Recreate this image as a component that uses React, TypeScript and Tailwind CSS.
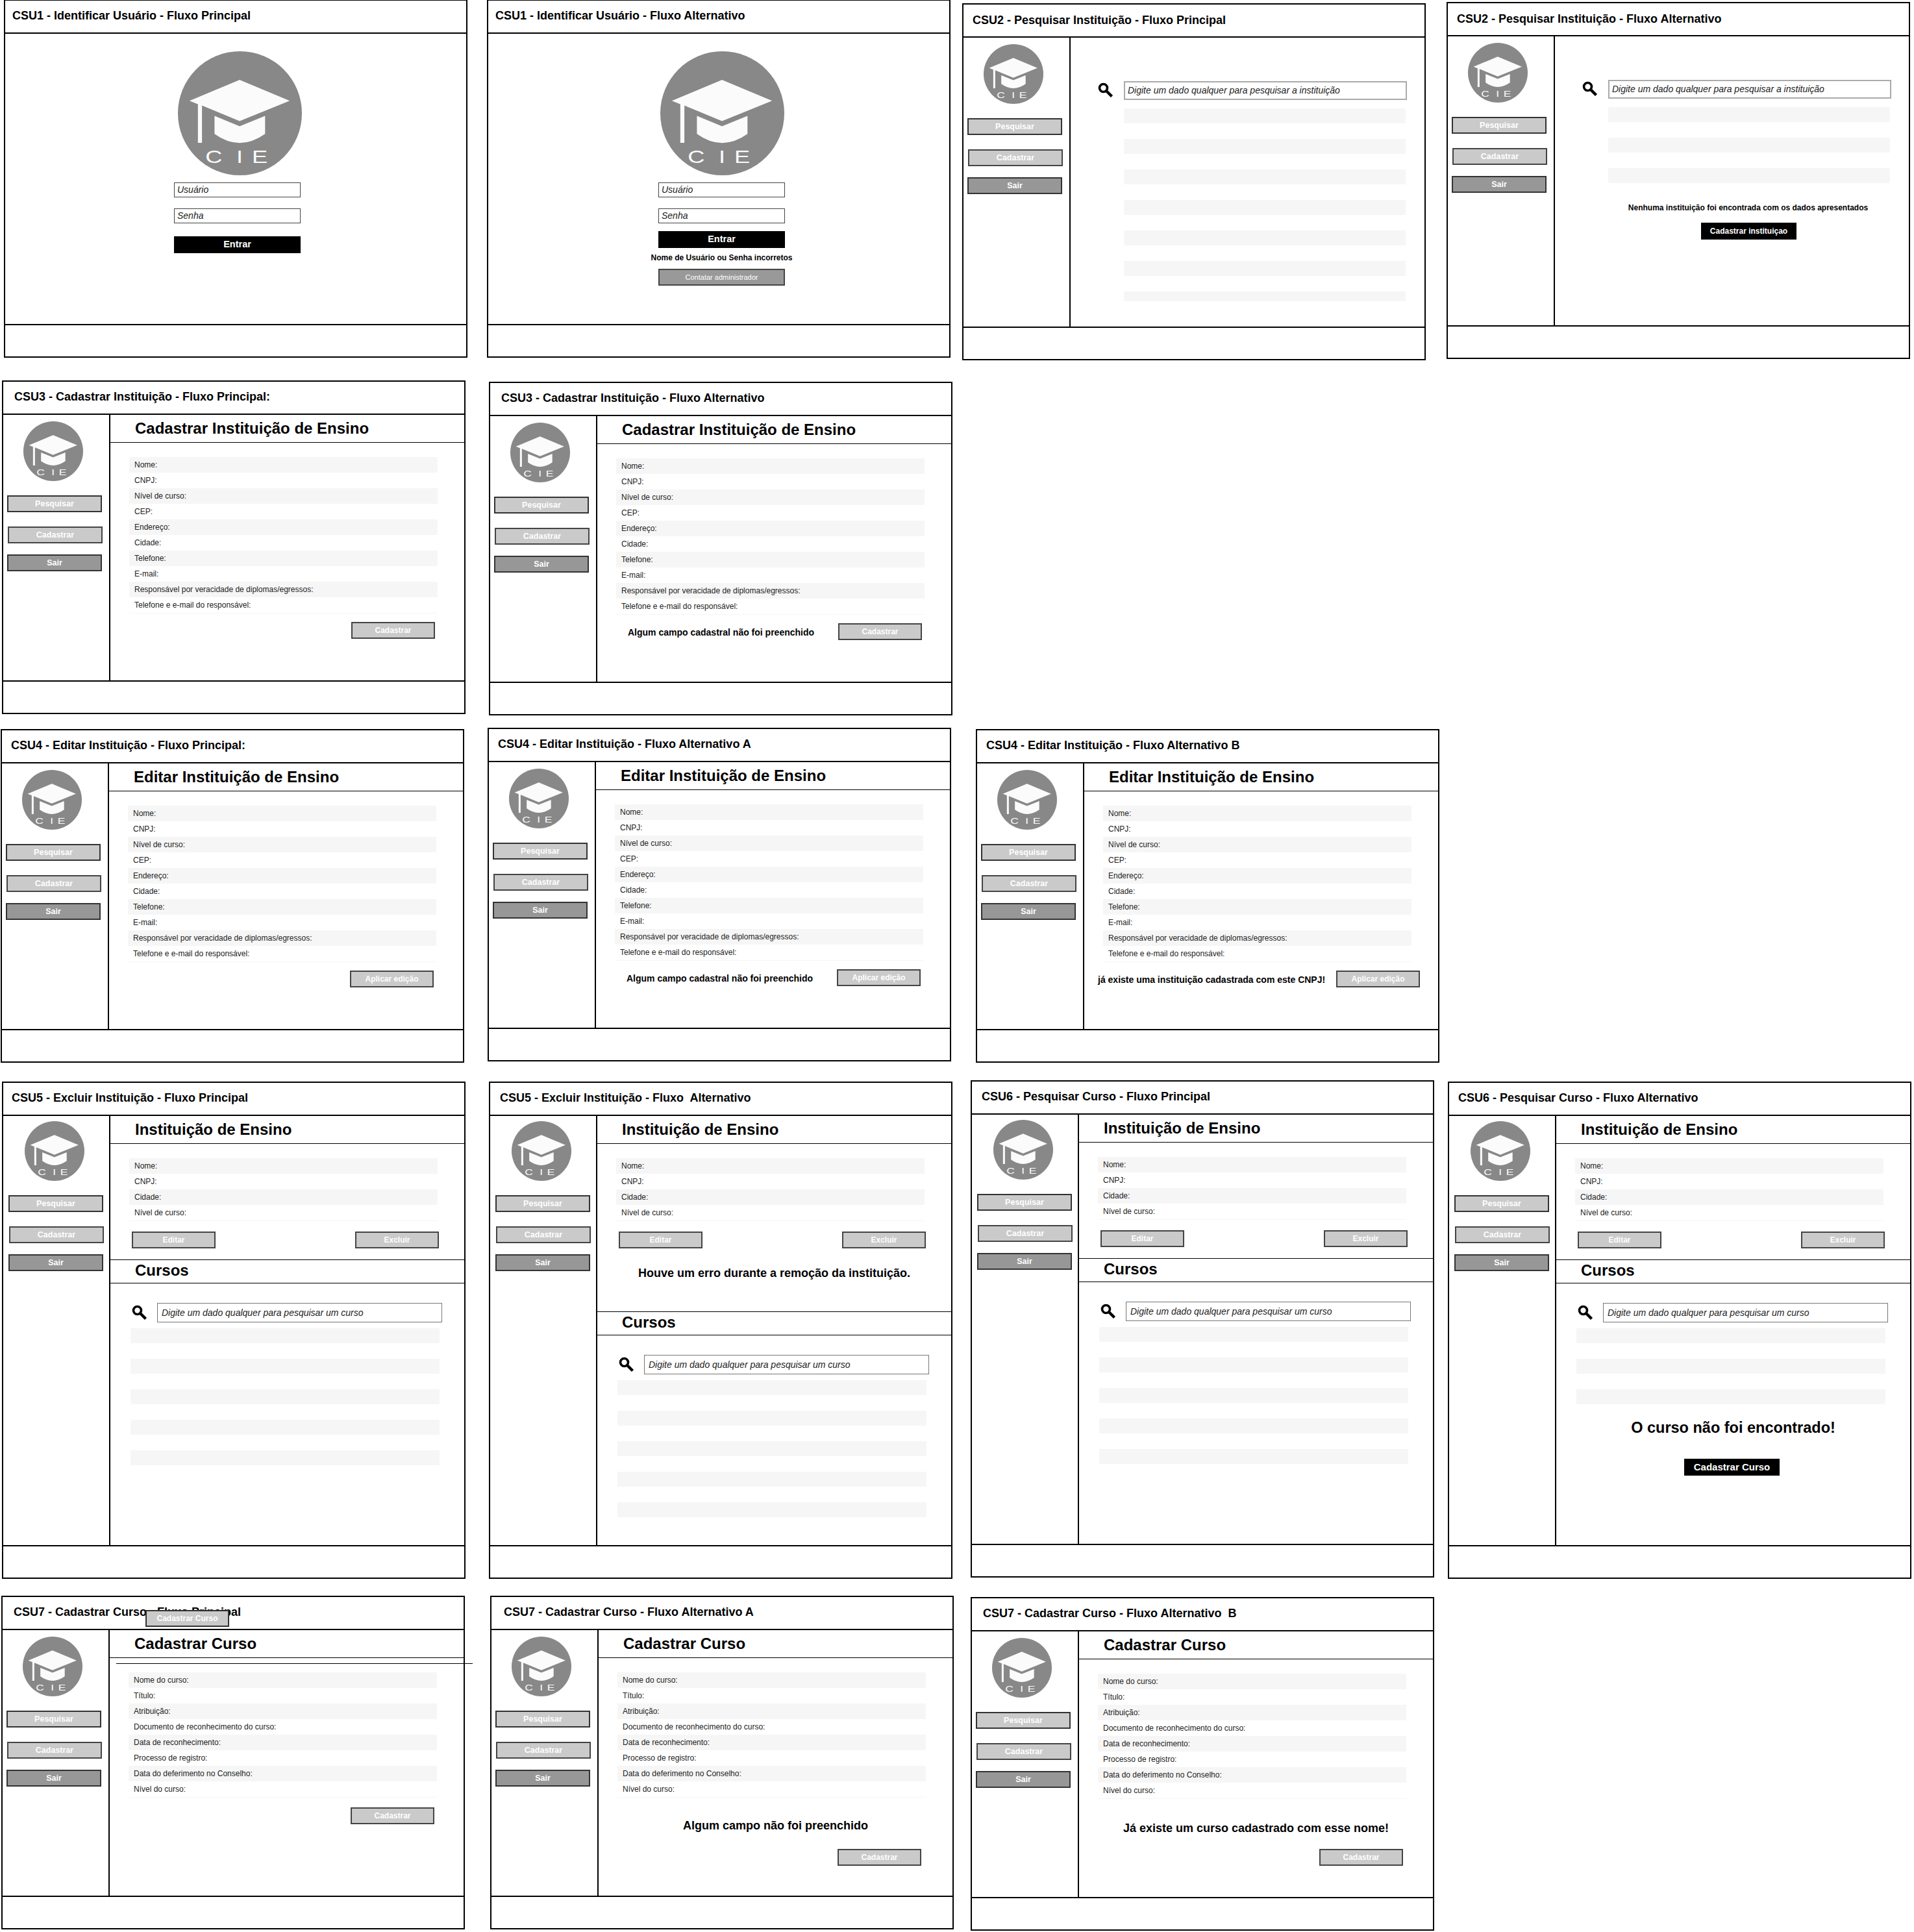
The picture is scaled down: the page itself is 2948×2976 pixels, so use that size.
import React from "react";

const letters = [
  { ch: "C", x: 42.5, sx: 1.3 },
  { ch: "I", x: 90.5, sx: 1.3 },
  { ch: "E", x: 114.5, sx: 1.3 },
];

function Logo({ size }: { size: "lg" | "sm" }) {
  return (
    <svg viewBox="0 0 192 192" className={size === "lg" ? "block w-[191px] h-[191px]" : "block w-[92px] h-[92px]"}>
      <circle cx="96" cy="96" r="96" fill="#888888" />
      <polygon points="18,76.7 95.6,44.3 173,76.7 95.6,108 37.3,84 37.3,141.7 31,141.7 31,82" fill="#fbfbfb" />
      <path d="M56.7 100 L95.6 116 L135 100 L135 128 Q95.6 156 56.7 128 Z" fill="#fbfbfb" />
      {letters.map((l) => (
        <text key={l.ch} transform={`translate(${l.x} 173) scale(${l.sx} 1)`} fontSize="28" fill="#fbfbfb" fontFamily="Liberation Sans, sans-serif">{l.ch}</text>
      ))}
    </svg>
  );
}

function Magnifier() {
  return (
    <svg viewBox="0 0 24 24" className="block w-[24px] h-[24px] shrink-0">
      <circle cx="8.5" cy="8.5" r="6" fill="none" stroke="#000" strokeWidth="3.6" />
      <path d="M13 13 L21.5 21.5" stroke="#000" strokeWidth="4.4" />
    </svg>
  );
}

function LightBtn({ label, className = "" }: { label: string; className?: string }) {
  return (
    <div className={`h-[26px] w-[129px] bg-[#cacaca] border-2 border-[#444] flex items-center justify-center text-white font-bold text-[12px] shrink-0 ${className}`}>
      {label}
    </div>
  );
}

function Sidebar({ tall }: { tall?: boolean }) {
  return (
    <div className={`w-[165px] shrink-0 border-r-2 border-black flex flex-col ${tall ? "pl-[2px]" : ""}`}>
      <div className={`${tall ? "mt-[8px]" : "mt-[10px]"} ml-[31px]`}><Logo size="sm" /></div>
      <div className="mt-[22px] ml-[6px] h-[26px] w-[146px] bg-[#cacaca] border-2 border-[#333] flex items-center justify-center text-white font-bold text-[12.5px]">Pesquisar</div>
      <div className="mt-[22px] ml-[7px] h-[26px] w-[146px] bg-[#cacaca] border-2 border-[#444] flex items-center justify-center text-white font-bold text-[12.5px]">Cadastrar</div>
      <div className="mt-[17px] ml-[6px] h-[26px] w-[146px] bg-[#979797] border-2 border-[#333] flex items-center justify-center text-white font-bold text-[12.5px]">Sair</div>
    </div>
  );
}

function Frame({ x, y, h, title, titleClass = "pl-[14px] pb-[2px]", children, noSidebar, tall, overlay }: {
  x: number; y: number; h: number; title: string; titleClass?: string; children: React.ReactNode; noSidebar?: boolean; tall?: boolean; overlay?: React.ReactNode;
}) {
  return (
    <section className="absolute w-[714px] bg-white border-2 border-black flex flex-col" style={{ left: x, top: y, height: h }}>
      <div className={`h-[51px] shrink-0 border-b-2 border-black flex items-center ${titleClass} text-[18px] font-bold whitespace-pre text-black`}>{title}</div>
      <div className="flex-1 flex min-h-0">
        {!noSidebar && <Sidebar tall={tall} />}
        <div className="flex-1 min-w-0 flex flex-col">{children}</div>
      </div>
      <div className="h-[50px] shrink-0 border-t-2 border-black" />
      {overlay}
    </section>
  );
}

function Heading({ text }: { text: string }) {
  return (
    <div className="h-[43px] shrink-0 border-b border-black flex items-center pl-[38px] text-[24px] font-bold text-black -mr-[2px]">
      {text}
    </div>
  );
}

function CursosHeading() {
  return (
    <div className="h-[36px] shrink-0 border-b border-black flex items-center pl-[38px] pb-[4px] text-[24px] font-bold text-black">
      Cursos
    </div>
  );
}

function Rows({ labels }: { labels: string[] }) {
  return (
    <div className="mt-[22px] ml-[29px] w-[475px] border-b border-[#f6f6f6] text-[12px] text-[#222]">
      {labels.map((l, i) => (
        <div key={l} className={`h-[24px] pl-[8px] flex items-center ${i % 2 === 0 ? "bg-[#f6f6f6]" : ""}`}>{l}</div>
      ))}
    </div>
  );
}

const instFields = ["Nome:", "CNPJ:", "Nível de curso:", "CEP:", "Endereço:", "Cidade:", "Telefone:", "E-mail:", "Responsável por veracidade de diplomas/egressos:", "Telefone e e-mail do responsável:"];
const cursoFields = ["Nome do curso:", "Título:", "Atribuição:", "Documento de reconhecimento do curso:", "Data de reconhecimento:", "Processo de registro:", "Data do deferimento no Conselho:", "Nível do curso:"];

function Form({ heading, button, note, noteClass = "ml-[18px]", btnClass = "mr-[4px]" }: { heading: string; button: string; note?: string; noteClass?: string; btnClass?: string }) {
  return (
    <>
      <Heading text={heading} />
      <Rows labels={instFields} />
      <div className="mt-[13px] ml-[29px] w-[475px] flex items-center justify-end">
        {note && <div className={`mr-auto mt-[3px] font-bold text-[14px] text-black whitespace-nowrap ${noteClass}`}>{note}</div>}
        <LightBtn label={button} className={btnClass} />
      </div>
    </>
  );
}

function SearchList({ count, short }: { count: number; short?: boolean }) {
  return (
    <div className="flex flex-col">
      {Array.from({ length: count }).map((_, i) => (
        <div key={i} className={`${short && i === count - 1 ? "h-[15px]" : "h-[23px]"} ${i === count - 1 ? "" : "mb-[24px]"} bg-[#f6f6f6]`} />
      ))}
    </div>
  );
}

function InstSearch({ count, short }: { count: number; short?: boolean }) {
  return (
    <div className="mt-[67px]">
      <div className="flex items-start ml-[42px]">
        <div className="w-[40px] mt-[2px]"><Magnifier /></div>
        <div className="w-[436px] h-[29px] border-2 border-[#aaa] pl-[4px] flex items-center italic text-[14px] text-[#222] whitespace-nowrap">Digite um dado qualquer para pesquisar a instituição</div>
      </div>
      <div className="mt-[13px] ml-[82px] w-[434px]"><SearchList count={count} short={short} /></div>
    </div>
  );
}

function InstInfo() {
  return (
    <>
      <Heading text="Instituição de Ensino" />
      <Rows labels={["Nome:", "CNPJ:", "Cidade:", "Nível de curso:"]} />
      <div className="mt-[16px] ml-[33px] w-[473px] flex justify-between">
        <LightBtn label="Editar" />
        <LightBtn label="Excluir" />
      </div>
    </>
  );
}

function CourseSearch({ count }: { count: number }) {
  return (
    <div className="mt-[30px]">
      <div className="flex items-center ml-[33px]">
        <div className="w-[39px]"><Magnifier /></div>
        <div className="w-[439px] h-[30px] border border-[#777] pl-[6px] flex items-center italic text-[14px] text-[#222] whitespace-nowrap">Digite um dado qualquer para pesquisar um curso</div>
      </div>
      <div className="mt-[9px] ml-[31px] w-[476px]"><SearchList count={count} /></div>
    </div>
  );
}

function LoginBody({ error, wrapClass, logoClass }: { error?: boolean; wrapClass: string; logoClass: string }) {
  return (
    <div className={`w-[195px] flex flex-col ${wrapClass}`}>
      <div className={`mt-[27px] ${logoClass}`}><Logo size="lg" /></div>
      <div className="mt-[11px] h-[23px] w-[195px] border border-[#444] pl-[4px] flex items-center italic text-[14px] text-[#222]">Usuário</div>
      <div className="mt-[17px] h-[23px] w-[195px] border border-[#444] pl-[4px] flex items-center italic text-[14px] text-[#222]">Senha</div>
      <div className={`${error ? "mt-[12px]" : "mt-[20px]"} h-[26px] bg-black text-white font-bold text-[14.5px] flex items-center justify-center`}>Entrar</div>
      {error && (
        <>
          <div className="mt-[7px] h-[16px] flex items-center justify-center font-bold text-[12px] whitespace-nowrap text-black">Nome de Usuário ou Senha incorretos</div>
          <div className="mt-[9px] h-[26px] bg-[#999] border-2 border-[#444] text-white text-[11px] flex items-center justify-center">Contatar administrador</div>
        </>
      )}
    </div>
  );
}

function CursosBlock({ count }: { count: number }) {
  return (
    <>
      <CursosHeading />
      <CourseSearch count={count} />
    </>
  );
}

export default function App() {
  return (
    <div className="relative w-[2948px] h-[2976px] bg-white overflow-hidden font-['Liberation_Sans',Arial,sans-serif] text-black">
      <Frame x={6} y={-1} h={552} noSidebar titleClass="pl-[11px] pb-[2px]" title="CSU1 - Identificar Usuário - Fluxo Principal"><LoginBody wrapClass="ml-[260px]" logoClass="ml-[6px]" /></Frame>
      <Frame x={750} y={-1} h={552} noSidebar titleClass="pl-[11px] pb-[2px]" title="CSU1 - Identificar Usuário - Fluxo Alternativo"><LoginBody error wrapClass="ml-[262px]" logoClass="ml-[3px]" /></Frame>

      <Frame x={1482} y={5} h={550} titleClass="pl-[14px]" title="CSU2 - Pesquisar Instituição - Fluxo Principal"><InstSearch count={7} short /></Frame>
      <Frame x={2228} y={3} h={550} titleClass="pl-[14px]" title="CSU2 - Pesquisar Instituição - Fluxo Alternativo">
        <InstSearch count={3} />
        <div className="mt-[29px] pl-[50px] text-center font-bold text-[12px] whitespace-nowrap text-black">Nenhuma instituição foi encontrada com os dados apresentados</div>
        <div className="mt-[14px] ml-[225px] w-[147px] h-[26px] bg-black text-white font-bold text-[12px] flex items-center justify-center">Cadastrar instituiçao</div>
      </Frame>

      <Frame x={3} y={586} h={514} titleClass="pl-[17px] pb-[2px]" title="CSU3 - Cadastrar Instituição - Fluxo Principal:"><Form heading="Cadastrar Instituição de Ensino" button="Cadastrar" /></Frame>
      <Frame x={753} y={588} h={514} titleClass="pl-[17px] pb-[2px]" title="CSU3 - Cadastrar Instituição - Fluxo Alternativo"><Form heading="Cadastrar Instituição de Ensino" button="Cadastrar" note="Algum campo cadastral não foi preenchido" /></Frame>

      <Frame x={1} y={1123} h={514} title="CSU4 - Editar Instituição - Fluxo Principal:"><Form heading="Editar Instituição de Ensino" button="Aplicar edição" /></Frame>
      <Frame x={751} y={1121} h={514} title="CSU4 - Editar Instituição - Fluxo Alternativo A"><Form heading="Editar Instituição de Ensino" button="Aplicar edição" note="Algum campo cadastral não foi preenchido" /></Frame>
      <Frame x={1503} y={1123} h={514} title="CSU4 - Editar Instituição - Fluxo Alternativo B"><Form heading="Editar Instituição de Ensino" button="Aplicar edição" note="já existe uma instituição cadastrada com este CNPJ!" noteClass="-ml-[8px]" btnClass="-mr-[13px]" /></Frame>

      <Frame x={3} y={1666} h={766} tall titleClass="pl-[13px] pb-[2px]" title="CSU5 - Excluir Instituição - Fluxo Principal">
        <InstInfo />
        <div className="mt-[17px] border-t border-black -mr-[2px]" />
        <CursosBlock count={5} />
      </Frame>
      <Frame x={753} y={1666} h={766} tall titleClass="pl-[15px] pb-[2px]" title="CSU5 - Excluir Instituição - Fluxo  Alternativo">
        <InstInfo />
        <div className="h-[97px] pb-[20px] flex items-center justify-center font-bold text-[18px] text-black">Houve um erro durante a remoção da instituição.</div>
        <div className="border-t border-black" />
        <CursosBlock count={5} />
      </Frame>
      <Frame x={1495} y={1664} h={766} tall titleClass="pl-[15px] pb-[2px]" title="CSU6 - Pesquisar Curso - Fluxo Principal">
        <InstInfo />
        <div className="mt-[17px] border-t border-black -mr-[2px]" />
        <CursosBlock count={5} />
      </Frame>
      <Frame x={2230} y={1666} h={766} tall title="CSU6 - Pesquisar Curso - Fluxo Alternativo">
        <InstInfo />
        <div className="mt-[17px] border-t border-black -mr-[2px]" />
        <CursosBlock count={3} />
        <div className="mt-[19px] text-center font-bold text-[23.5px] text-black">O curso não foi encontrado!</div>
        <div className="mt-[30px] ml-[197px] w-[147px] h-[26px] bg-black text-white font-bold text-[15px] flex items-center justify-center">Cadastrar Curso</div>
      </Frame>

      <Frame
        x={2} y={2458} h={514}
        titleClass="pl-[17px] pb-[2px]"
        title="CSU7 - Cadastrar Curso - Fluxo Principal"
        overlay={
          <>
            <div className="absolute left-[220px] top-[20px] w-[129px] h-[26px] bg-[#cacaca] border-2 border-[#333] flex items-center justify-center text-white font-bold text-[12px]">Cadastrar Curso</div>
            <div className="absolute left-[175px] top-[102px] w-[549px] h-px bg-black" />
          </>
        }
      >
        <Heading text="Cadastrar Curso" />
        <Rows labels={cursoFields} />
        <div className="mt-[15px] ml-[29px] w-[475px] flex justify-end pr-[4px]"><LightBtn label="Cadastrar" /></div>
      </Frame>
      <Frame x={755} y={2458} h={514} titleClass="pl-[19px] pb-[2px]" title="CSU7 - Cadastrar Curso - Fluxo Alternativo A">
        <Heading text="Cadastrar Curso" />
        <Rows labels={cursoFields} />
        <div className="mt-[30px] h-[20px] text-center font-bold text-[18px] text-black">Algum campo não foi preenchido</div>
        <div className="mt-[29px] ml-[368px]"><LightBtn label="Cadastrar" /></div>
      </Frame>
      <Frame x={1495} y={2460} h={514} titleClass="pl-[17px] pb-[2px]" title="CSU7 - Cadastrar Curso - Fluxo Alternativo  B">
        <Heading text="Cadastrar Curso" />
        <Rows labels={cursoFields} />
        <div className="mt-[32px] h-[20px] text-center font-bold text-[18px] text-black">Já existe um curso cadastrado com esse nome!</div>
        <div className="mt-[25px] ml-[370px]"><LightBtn label="Cadastrar" /></div>
      </Frame>
    </div>
  );
}
